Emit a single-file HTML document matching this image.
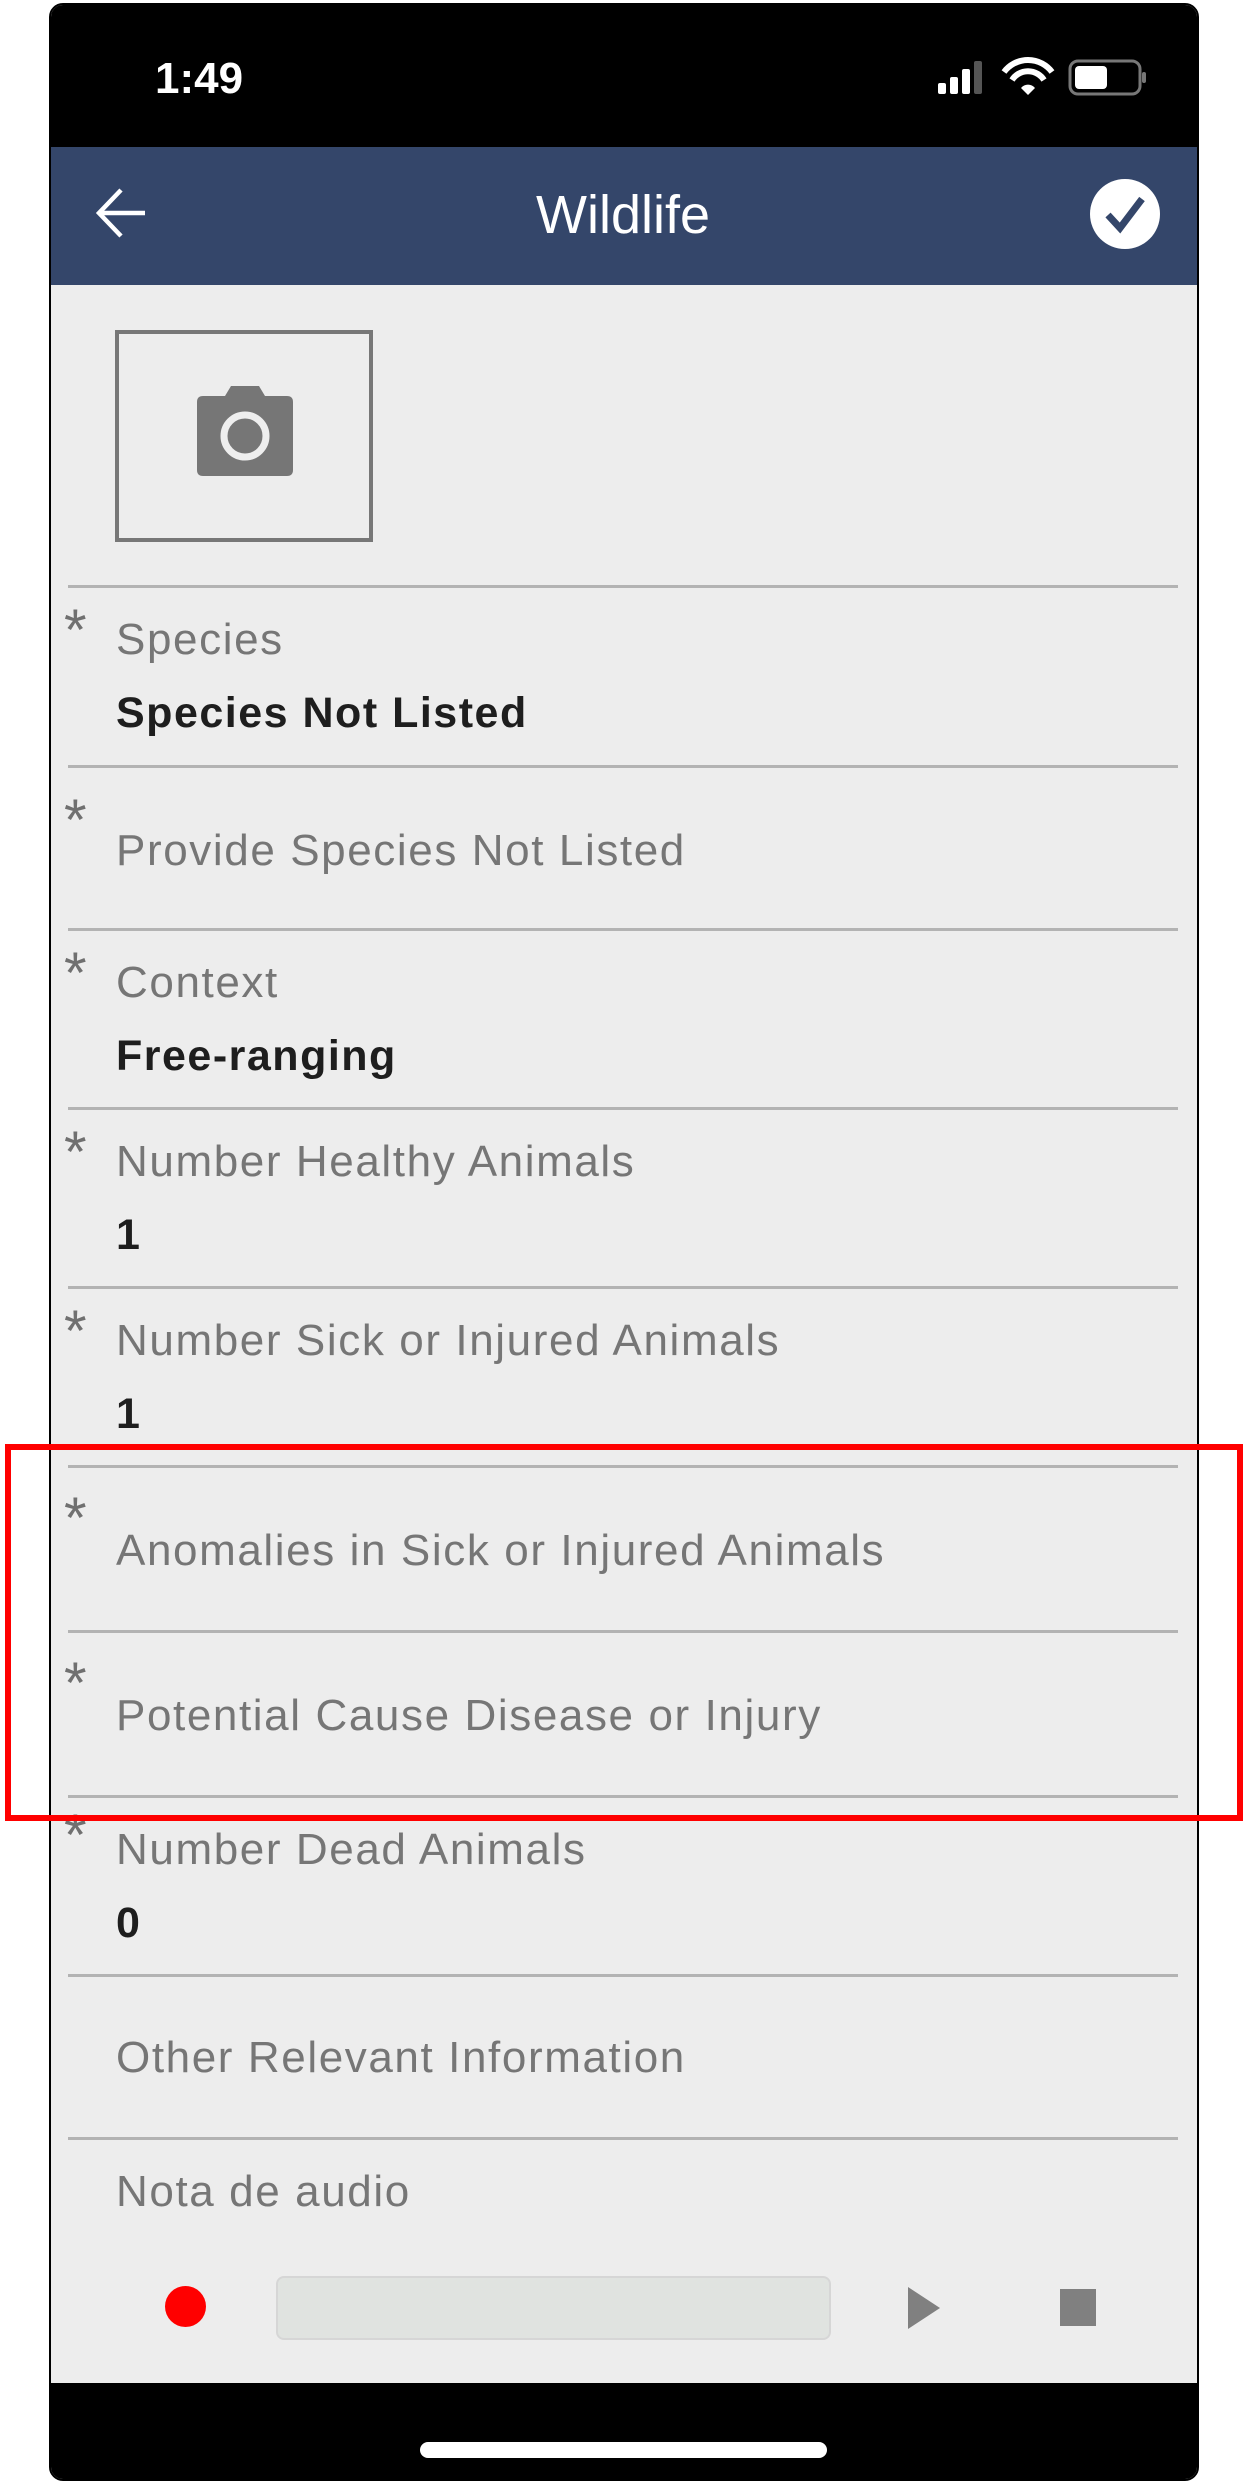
<!DOCTYPE html>
<html><head><meta charset="utf-8"><style>
*{margin:0;padding:0;box-sizing:border-box}
body{width:1246px;height:2484px;background:#fff;position:relative;overflow:hidden;font-family:"Liberation Sans",sans-serif}
.abs{position:absolute}
.frame{left:49px;top:3px;width:1150px;height:2478px;border:2px solid #000;border-radius:14px;overflow:hidden;background:#ededed}
.div{position:absolute;left:68px;width:1110px;height:3px;background:#b3b3b3}
.lab{position:absolute;left:116px;font-size:44px;line-height:44px;color:#767676;letter-spacing:1.6px;white-space:nowrap}
.val{position:absolute;left:116px;font-size:43px;line-height:44px;color:#1e1e1e;font-weight:bold;letter-spacing:1.5px;white-space:nowrap}
.ast{position:absolute;left:64px;font-size:58px;line-height:58px;color:#707070}
</style></head><body>
<div class="abs frame">
  <div class="abs" style="left:0;top:0;width:1150px;height:142px;background:#000"></div>
  <div class="abs" style="left:0;top:142px;width:1150px;height:138px;background:#34466a"></div>
  <div class="abs" style="left:0;top:2378px;width:1150px;height:110px;background:#000"></div>
</div>
<!-- status bar -->
<div class="abs" style="left:155px;top:57px;font-size:44px;line-height:44px;color:#fff;font-weight:bold">1:49</div>
<svg class="abs" style="left:930px;top:55px" width="220" height="45" viewBox="0 0 220 45">
  <rect x="8" y="28" width="8" height="11" rx="2" fill="#fff"/>
  <rect x="20" y="22" width="8" height="17" rx="2" fill="#fff"/>
  <rect x="32" y="14" width="8" height="25" rx="2" fill="#fff"/>
  <rect x="44" y="6" width="8" height="33" rx="2" fill="#555"/>
  <path d="M74 17 A30 30 0 0 1 122 17" stroke="#fff" stroke-width="6" fill="none"/>
  <path d="M82 25 A19 19 0 0 1 114 25" stroke="#fff" stroke-width="6" fill="none"/>
  <path d="M91 33 L98 40 L105 33 A9 9 0 0 0 91 33Z" fill="#fff"/>
  <rect x="140" y="6" width="70" height="33" rx="8" fill="none" stroke="#777" stroke-width="3"/>
  <rect x="145" y="11" width="32" height="23" rx="4" fill="#fff"/>
  <rect x="212" y="17" width="4" height="11" rx="2" fill="#777"/>
</svg>
<!-- navbar -->
<svg class="abs" style="left:95px;top:186px" width="56" height="54" viewBox="0 0 56 54">
  <path d="M4 27 H50 M26 4 L4 27 L26 50" stroke="#fff" stroke-width="4.5" fill="none"/>
</svg>
<div class="abs" style="left:0;width:1246px;top:188px;text-align:center;font-size:54px;line-height:54px;color:#fff">Wildlife</div>
<svg class="abs" style="left:1088px;top:177px" width="74" height="74" viewBox="0 0 74 74">
  <circle cx="37" cy="37" r="35" fill="#fff"/>
  <path d="M20 38 L32 51 L54 22" stroke="#34466a" stroke-width="7" fill="none"/>
</svg>
<!-- camera -->
<div class="abs" style="left:115px;top:330px;width:258px;height:212px;border:4px solid #777"></div>
<svg class="abs" style="left:195px;top:384px" width="100" height="94" viewBox="0 0 100 94">
  <path d="M30 12 L36 2 H64 L70 12 H92 Q98 12 98 18 V86 Q98 92 92 92 H8 Q2 92 2 86 V18 Q2 12 8 12Z" fill="#767676"/>
  <circle cx="50" cy="52" r="21" fill="none" stroke="#eee" stroke-width="7"/>
</svg>
<!-- dividers -->
<div class="div" style="top:585px"></div>
<div class="div" style="top:765px"></div>
<div class="div" style="top:928px"></div>
<div class="div" style="top:1107px"></div>
<div class="div" style="top:1286px"></div>
<div class="div" style="top:1465px"></div>
<div class="div" style="top:1630px"></div>
<div class="div" style="top:1795px"></div>
<div class="div" style="top:1974px"></div>
<div class="div" style="top:2137px"></div>
<!-- rows -->
<div class="ast" style="top:602px">*</div>
<div class="lab" style="top:618px">Species</div>
<div class="val" style="top:691px">Species Not Listed</div>

<div class="ast" style="top:792px">*</div>
<div class="lab" style="top:829px">Provide Species Not Listed</div>

<div class="ast" style="top:945px">*</div>
<div class="lab" style="top:961px">Context</div>
<div class="val" style="top:1034px">Free-ranging</div>

<div class="ast" style="top:1124px">*</div>
<div class="lab" style="top:1140px">Number Healthy Animals</div>
<div class="val" style="top:1213px">1</div>

<div class="ast" style="top:1303px">*</div>
<div class="lab" style="top:1319px">Number Sick or Injured Animals</div>
<div class="val" style="top:1392px">1</div>

<div class="ast" style="top:1490px">*</div>
<div class="lab" style="top:1529px">Anomalies in Sick or Injured Animals</div>

<div class="ast" style="top:1655px">*</div>
<div class="lab" style="top:1694px">Potential Cause Disease or Injury</div>

<div class="ast" style="top:1807px">*</div>
<div class="lab" style="top:1828px">Number Dead Animals</div>
<div class="val" style="top:1901px">0</div>

<div class="lab" style="top:2036px">Other Relevant Information</div>
<div class="lab" style="top:2170px">Nota de audio</div>
<!-- audio -->
<div class="abs" style="left:165px;top:2286px;width:41px;height:41px;border-radius:50%;background:#f00"></div>
<div class="abs" style="left:276px;top:2276px;width:555px;height:64px;background:#e0e3e0;border:2px solid #d6d6d6;border-radius:8px"></div>
<svg class="abs" style="left:906px;top:2286px" width="36" height="44" viewBox="0 0 36 44"><path d="M2 1 L34 22 L2 43Z" fill="#808080"/></svg>
<div class="abs" style="left:1060px;top:2289px;width:36px;height:37px;background:#808080"></div>
<div class="abs" style="left:420px;top:2442px;width:407px;height:16px;border-radius:8px;background:#fff"></div>
<!-- red highlight -->
<div class="abs" style="left:5px;top:1444px;width:1238px;height:377px;border:6px solid #f00"></div>
</body></html>
